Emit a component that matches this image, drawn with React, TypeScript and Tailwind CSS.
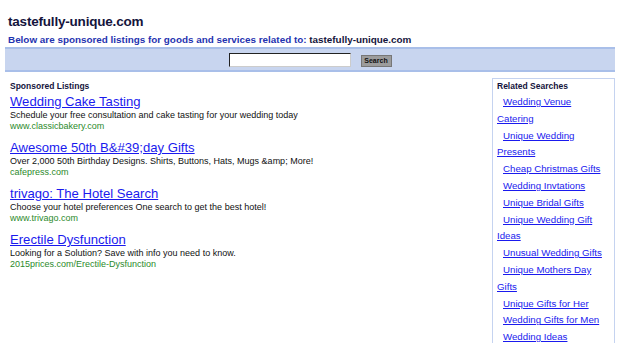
import React from "react";

type Listing = { title: string; desc: string; url: string };

const listings: Listing[] = [
  {
    title: "Wedding Cake Tasting",
    desc: "Schedule your free consultation and cake tasting for your wedding today",
    url: "www.classicbakery.com",
  },
  {
    title: "Awesome 50th B&#39;day Gifts",
    desc: "Over 2,000 50th Birthday Designs. Shirts, Buttons, Hats, Mugs &amp; More!",
    url: "cafepress.com",
  },
  {
    title: "trivago: The Hotel Search",
    desc: "Choose your hotel preferences One search to get the best hotel!",
    url: "www.trivago.com",
  },
  {
    title: "Erectile Dysfunction",
    desc: "Looking for a Solution? Save with info you need to know.",
    url: "2015prices.com/Erectile-Dysfunction",
  },
];

// related searches; wrapped lines sit flush left, the rest are indented
const related: { text: string; indent: boolean }[] = [
  { text: "Wedding Venue", indent: true },
  { text: "Catering", indent: false },
  { text: "Unique Wedding", indent: true },
  { text: "Presents", indent: false },
  { text: "Cheap Christmas Gifts", indent: true },
  { text: "Wedding Invtations", indent: true },
  { text: "Unique Bridal Gifts", indent: true },
  { text: "Unique Wedding Gift", indent: true },
  { text: "Ideas", indent: false },
  { text: "Unusual Wedding Gifts", indent: true },
  { text: "Unique Mothers Day", indent: true },
  { text: "Gifts", indent: false },
  { text: "Unique Gifts for Her", indent: true },
  { text: "Wedding Gifts for Men", indent: true },
  { text: "Wedding Ideas", indent: true },
];

export default function App() {
  return (
    <div className="h-[343px] w-[620px] overflow-hidden bg-white font-['Liberation_Sans',Arial,sans-serif]">
      <div className="px-[8px] pt-[13px]">
        <h1 className="text-[13.5px] font-bold leading-[17px] tracking-[-0.2px] text-[#14143c]">tastefully-unique.com</h1>
        <p className="mt-[3px] text-[9.9px] font-bold leading-[13px] text-[#1f33b0]">
          Below are sponsored listings for goods and services related to:{" "}
          <span className="text-[#14143c]">tastefully-unique.com</span>
        </p>
      </div>

      <div className="mx-[5px] mt-[1px] flex h-[25px] items-center justify-center gap-[10px] border-y-2 border-[#a9bfe9] bg-[#c8d5ef]">
        <input
          type="text"
          className="h-[14px] w-[122px] border border-[#222] border-r-[#ccc] border-b-[#ccc] bg-white"
        />
        <button className="mt-[2px] h-[12px] w-[31px] border border-[#777] bg-[#9c9c9c] text-[7px] font-bold leading-none text-[#111]">
          Search
        </button>
      </div>

      <div className="mt-[6px] flex">
        <div className="flex-1 pl-[10px] pt-[3px]">
          <div className="text-[8.5px] font-bold leading-[11px] text-[#14143c]">Sponsored Listings</div>
          <div className="mt-[2px] flex flex-col gap-[8px]">
            {listings.map((l) => (
              <div key={l.title}>
                <a href="#" className="block text-[13.1px] leading-[16px] text-[#1a1aee] underline">
                  {l.title}
                </a>
                <div className="text-[9px] leading-[11px] text-[#111]">{l.desc}</div>
                <div className="text-[9px] leading-[11px] text-[#2b8a2b]">{l.url}</div>
              </div>
            ))}
          </div>
        </div>

        <div className="mr-[5px] h-[280px] w-[123px] border border-[#c5d3f0] pl-[4px] pt-[2px]">
          <div className="text-[8.5px] font-bold leading-[11px] text-[#14143c]">Related Searches</div>
          <ul className="mt-[2px]">
            {related.map((r) => (
              <li key={r.text} className={`text-[9.7px] leading-[16.8px] ${r.indent ? "pl-[6px]" : ""}`}>
                <a href="#" className="text-[#1a1aee] underline">
                  {r.text}
                </a>
              </li>
            ))}
          </ul>
        </div>
      </div>
    </div>
  );
}
